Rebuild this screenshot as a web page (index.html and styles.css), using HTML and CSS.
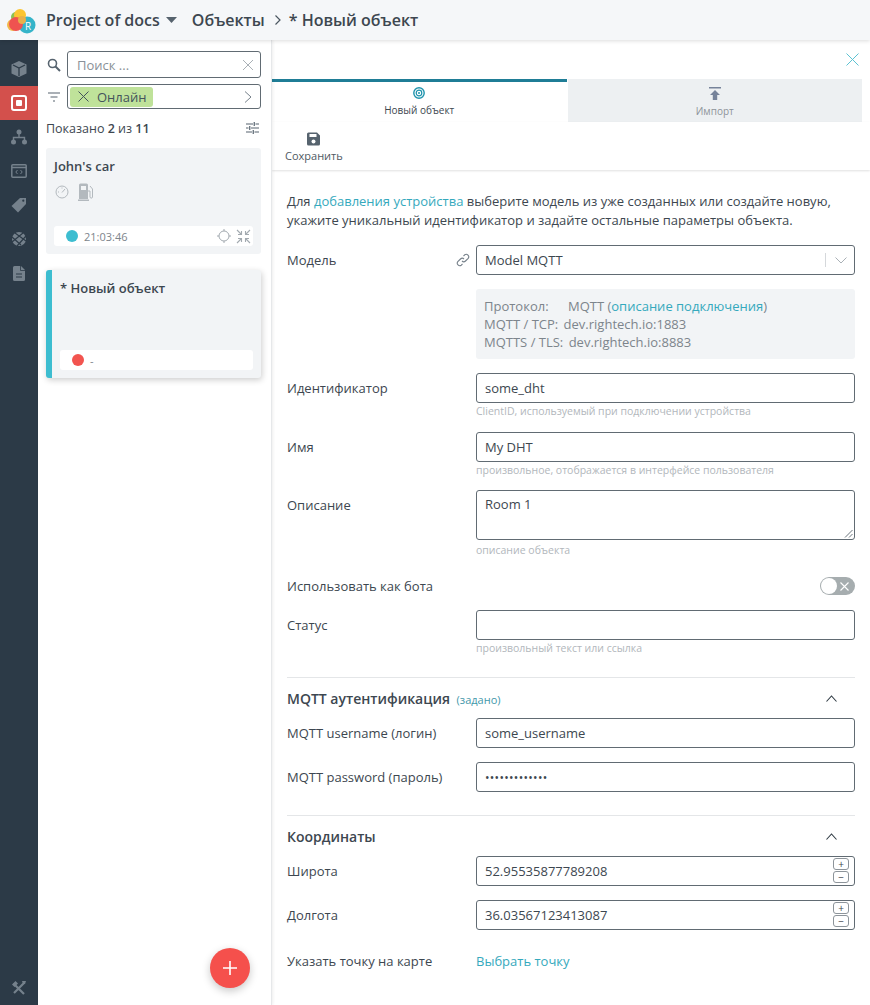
FILE: index.html
```html
<!DOCTYPE html>
<html lang="ru">
<head>
<meta charset="utf-8">
<title>Новый объект</title>
<link rel="stylesheet" href="styles.css">
</head>
<body>
<header class="topbar">
  <svg class="logo" width="36" height="34" viewBox="0 0 36 34">
    <circle cx="25" cy="22" r="8.5" fill="#35b4c9"/>
    <circle cx="11" cy="22" r="6" fill="#f2b84a"/>
    <circle cx="14" cy="14" r="5" fill="#8cc152"/>
    <circle cx="18" cy="12" r="6" fill="#fbc531"/>
    <circle cx="14" cy="21" r="7" fill="#ef5350"/>
    <circle cx="20" cy="17" r="4" fill="#e8b04a"/>
    <text x="23" y="27" class="logo-r">R</text>
  </svg>
  <span class="crumb project">Project of docs</span>
  <svg class="caret" width="11" height="6" viewBox="0 0 11 6"><path d="M0 0h11L5.5 6z" fill="#56636e"/></svg>
  <span class="crumb section">Объекты</span>
  <svg class="crumb-sep" width="8" height="12" viewBox="0 0 8 12"><path d="M1.5 1.5 6 6l-4.500 4.500" fill="none" stroke="#4a5660" stroke-width="1.200"/></svg>
  <span class="crumb">* Новый объект</span>
</header>

<div class="shell">
  <nav class="rail">
    <div class="rail-top">
      <div class="rail-item">
        <svg width="18" height="18" viewBox="0 0 18 18"><path d="M9 1 16.500 4.500v9L9 17l-7.500-3.500v-9z" fill="#75818c"/><path d="M3 5l6 3 6-3M9 8v8" fill="none" stroke="#2c3a47" stroke-width="1.300"/></svg>
      </div>
      <div class="rail-item active">
        <svg width="16" height="16" viewBox="0 0 16 16"><rect x="1" y="1" width="14" height="14" rx="2" fill="none" stroke="#fff" stroke-width="2"/><rect x="5" y="5" width="6" height="6" rx="1" fill="#fff"/></svg>
      </div>
      <div class="rail-item">
        <svg width="16" height="16" viewBox="0 0 16 16"><circle cx="8" cy="3" r="2.500" fill="#75818c"/><circle cx="2.500" cy="13" r="2.500" fill="#75818c"/><circle cx="13.500" cy="13" r="2.500" fill="#75818c"/><path d="M8 5v3M2.500 11V8.500h11V11" fill="none" stroke="#75818c" stroke-width="1.400"/></svg>
      </div>
      <div class="rail-item">
        <svg width="16" height="16" viewBox="0 0 16 16"><rect x=".8" y="1.800" width="14.400" height="12.400" rx="1" fill="none" stroke="#75818c" stroke-width="1.500"/><path d="M1 4.500h14" stroke="#75818c" stroke-width="1.500"/><path d="M6.500 7 4.800 9l1.700 2M9.500 7l1.700 2-1.700 2" fill="none" stroke="#75818c" stroke-width="1"/></svg>
      </div>
      <div class="rail-item">
        <svg width="16" height="16" viewBox="0 0 16 16"><path d="M9 1h6v6l-8 8.500L.5 9z" fill="#75818c"/><circle cx="12.300" cy="3.700" r="1.100" fill="#2c3a47"/></svg>
      </div>
      <div class="rail-item">
        <svg width="16" height="16" viewBox="0 0 16 16"><circle cx="8" cy="8" r="7" fill="#75818c"/><path d="M1 6l9 8M4 2l11 8M1 11 12 2M6 15 15 5" stroke="#2c3a47" stroke-width="1.200"/></svg>
      </div>
      <div class="rail-item">
        <svg width="12" height="15" viewBox="0 0 12 15"><path d="M0 1.500A1.500 1.500 0 0 1 1.500 0H8l4 4v9.500a1.500 1.500 0 0 1-1.500 1.500h-9A1.500 1.500 0 0 1 0 13.500z" fill="#75818c"/><path d="M3 8h6M3 11h6" stroke="#2c3a47" stroke-width="1.200"/><path d="M7.500 0v4.500H12" fill="none" stroke="#2c3a47" stroke-width=".8"/></svg>
      </div>
    </div>
    <div class="rail-tools">
      <svg width="14" height="14" viewBox="0 0 14 14"><path d="M1.500 2.500 12 13M12.500 1.500 2 12" stroke="#75818c" stroke-width="2.200"/><path d="M0 3.500 3.500 0 6 2.500 2.500 6zM10 0l4 0-1 3-2 0z" fill="#75818c"/></svg>
    </div>
  </nav>

  <aside class="list-panel">
    <div class="filter-row">
      <svg class="filter-icon" width="14" height="14" viewBox="0 0 14 14"><circle cx="5.500" cy="5.500" r="4" fill="none" stroke="#56636e" stroke-width="1.600"/><path d="M8.500 8.500 13 13" stroke="#56636e" stroke-width="2"/></svg>
      <div class="box search">
        <span class="placeholder">Поиск ...</span>
        <svg width="12" height="12" viewBox="0 0 12 12"><path d="M1 1l10 10M11 1 1 11" stroke="#a9b0b6" stroke-width="1"/></svg>
      </div>
    </div>
    <div class="filter-row second">
      <svg class="filter-icon" width="14" height="10" viewBox="0 0 14 10"><path d="M1 1h12M3.500 5h7M6 9h2" stroke="#56636e" stroke-width="1.200"/></svg>
      <div class="box chips">
        <span class="chip">
          <svg width="11" height="11" viewBox="0 0 11 11"><path d="M.5.500l10 10M10.500.500l-10 10" stroke="#44545c" stroke-width="1"/></svg>
          Онлайн
        </span>
        <svg width="8" height="12" viewBox="0 0 8 12"><path d="M1 .5 7 6l-6 5.500" fill="none" stroke="#76808a" stroke-width="1"/></svg>
      </div>
    </div>
    <div class="shown">
      <span>Показано <b>2</b> из <b>11</b></span>
      <svg width="13" height="12" viewBox="0 0 13 12"><path d="M0 2h7M9.500 2H13M0 6h2.500M5 6h8M0 10h6M8.500 10H13M8.250 0v4M3.750 4v4M7.250 8v4" stroke="#56636e" stroke-width="1.200"/></svg>
    </div>

    <article class="card">
      <h3 class="card-title">John's car</h3>
      <div class="card-icons">
        <svg width="14" height="14" viewBox="0 0 14 14"><circle cx="7" cy="7" r="6" fill="none" stroke="#b3b9be" stroke-width="1"/><path d="M7 7.500 10 4M3 7h1M7 2.500v1" stroke="#b3b9be" stroke-width="1"/></svg>
        <svg width="16" height="18" viewBox="0 0 16 18"><path d="M1 2a1.500 1.500 0 0 1 1.500-1.500h6A1.500 1.500 0 0 1 10 2v14H1z" fill="#b3b9be"/><path d="M0 16.500h11v1.500H0z" fill="#b3b9be"/><rect x="3" y="3" width="5" height="4" fill="#f2f4f6"/><path d="M10 8h2v6c0 1.500 2.500 1.500 2.500 0V6L12 3" fill="none" stroke="#b3b9be" stroke-width="1"/></svg>
      </div>
      <div class="status-pill">
        <span class="dot teal"></span>
        <span class="time">21:03:46</span>
        <span class="pill-tools">
          <svg width="14" height="14" viewBox="0 0 14 14"><circle cx="7" cy="7" r="5" fill="none" stroke="#a3aab0" stroke-width="1"/><path d="M7 0v2M7 12v2M0 7h2M12 7h2" stroke="#a3aab0" stroke-width="1"/></svg>
          <svg width="15" height="15" viewBox="0 0 15 15"><path d="M1 1l4.500 4.500M5.500 2v3.500H2M14 1 9.500 5.500M9.500 2v3.500H13M1 14l4.500-4.500M5.500 13V9.500H2M14 14 9.500 9.500M9.500 13V9.500H13" fill="none" stroke="#a3aab0" stroke-width="1.100"/></svg>
        </span>
      </div>
    </article>

    <article class="card selected">
      <h3 class="card-title">* Новый объект</h3>
      <div class="status-pill">
        <span class="dot red"></span>
        <span class="time">-</span>
      </div>
    </article>

    <button class="fab" type="button" aria-label="Добавить">
      <svg width="14" height="14" viewBox="0 0 14 14"><path d="M7 0v14M0 7h14" stroke="#fff" stroke-width="1.600"/></svg>
    </button>
  </aside>

  <main class="editor">
    <div class="close-row">
      <svg width="13" height="13" viewBox="0 0 13 13"><path d="M.5.500l12 12M12.500.500l-12 12" stroke="#5cc2d2" stroke-width="1"/></svg>
    </div>
    <div class="tabs">
      <div class="tab current">
        <svg width="12" height="12" viewBox="0 0 12 12"><circle cx="6" cy="6" r="5.200" fill="none" stroke="#1e93ad" stroke-width="1.400"/><circle cx="6" cy="6" r="2.800" fill="none" stroke="#1e93ad" stroke-width="1.200"/><circle cx="6" cy="6" r="1" fill="#1e93ad"/></svg>
        <span>Новый объект</span>
      </div>
      <div class="tab">
        <svg width="12" height="13" viewBox="0 0 12 13"><path d="M0 .75h12" stroke="#76839a" stroke-width="1.500"/><path d="M6 3l5 5H8.200v5H3.800V8H1z" fill="#76839a"/></svg>
        <span>Импорт</span>
      </div>
    </div>
    <div class="toolbar">
      <button class="tool" type="button">
        <svg width="13" height="14" viewBox="0 0 13 14"><path d="M1.500.5H10L13 3.500V12a1.500 1.500 0 0 1-1.500 1.500h-10A1.500 1.500 0 0 1 0 12V2A1.500 1.500 0 0 1 1.500.5z" fill="#56636e"/><rect x="2.500" y="2" width="7" height="3" fill="#fff"/><circle cx="6.500" cy="9.500" r="2" fill="#fff"/></svg>
        <span>Сохранить</span>
      </button>
    </div>

    <form class="form">
      <p class="intro">Для <a class="link">добавления устройства</a> выберите модель из уже созданных или создайте новую, укажите уникальный идентификатор и задайте остальные параметры объекта.</p>

      <div class="row model-row">
        <label class="lbl">Модель
          <svg class="chain" width="14" height="14" viewBox="0 0 14 14"><path d="M6 8a2.500 2.500 0 0 0 3.500 0l2.700-2.700a2.500 2.500 0 0 0-3.500-3.500L7.500 3M8 6a2.500 2.500 0 0 0-3.500 0L1.800 8.700a2.500 2.500 0 0 0 3.500 3.500L6.500 11" fill="none" stroke="#76808a" stroke-width="1.100"/></svg>
        </label>
        <div class="input select">
          <span>Model MQTT</span>
          <span class="select-end">
            <i class="select-bar"></i>
            <svg width="12" height="7" viewBox="0 0 12 7"><path d="M.5.500 6 6l5.500-5.500" fill="none" stroke="#a9b0b6" stroke-width="1"/></svg>
          </span>
        </div>
      </div>

      <div class="row info-row">
        <span></span>
        <div class="info">
          <div>Протокол: <span class="gap-a"></span>MQTT (<a class="link">описание подключения</a>)</div>
          <div>MQTT / TCP: <span class="gap-b"></span>dev.rightech.io:1883</div>
          <div>MQTTS / TLS: <span class="gap-b"></span>dev.rightech.io:8883</div>
        </div>
      </div>

      <div class="row ident-row">
        <label class="lbl">Идентификатор</label>
        <div><div class="input">some_dht</div><div class="hint">ClientID, используемый при подключении устройства</div></div>
      </div>

      <div class="row name-row">
        <label class="lbl">Имя</label>
        <div><div class="input">My DHT</div><div class="hint">произвольное, отображается в интерфейсе пользователя</div></div>
      </div>

      <div class="row desc-row">
        <label class="lbl">Описание</label>
        <div>
          <div class="input area">Room 1
            <svg class="grip" width="9" height="9" viewBox="0 0 9 9"><path d="M8.500 1 1 8.500M8.500 5 5 8.500" stroke="#6b747c" stroke-width="1"/></svg>
          </div>
          <div class="hint area-hint">описание объекта</div>
        </div>
      </div>

      <div class="bot-row">
        <label class="lbl plain">Использовать как бота</label>
        <span class="toggle">
          <i class="knob"></i>
          <svg width="9" height="9" viewBox="0 0 9 9"><path d="M.5.500l8 8M8.500.500l-8 8" stroke="#fff" stroke-width="1.100"/></svg>
        </span>
      </div>

      <div class="row status-row">
        <label class="lbl">Статус</label>
        <div><div class="input empty"></div><div class="hint">произвольный текст или ссылка</div></div>
      </div>

      <section class="group mqtt">
        <div class="group-head">
          <h4>MQTT аутентификация <small>(задано)</small></h4>
          <svg width="11" height="7" viewBox="0 0 11 7"><path d="M.5 6.500l5-5.500 5 5.500" fill="none" stroke="#2f3a43" stroke-width="1.100"/></svg>
        </div>
        <div class="row compact">
          <label class="lbl">MQTT username (логин)</label>
          <div class="input">some_username</div>
        </div>
        <div class="row compact">
          <label class="lbl">MQTT password (пароль)</label>
          <div class="input dots">•••••••••••••</div>
        </div>
      </section>

      <section class="group coords">
        <div class="group-head">
          <h4>Координаты</h4>
          <svg width="11" height="7" viewBox="0 0 11 7"><path d="M.5 6.500l5-5.500 5 5.500" fill="none" stroke="#2f3a43" stroke-width="1.100"/></svg>
        </div>
        <div class="row compact">
          <label class="lbl">Широта</label>
          <div class="input number">52.95535877789208
            <span class="stepper"><i>+</i><i>−</i></span>
          </div>
        </div>
        <div class="row compact">
          <label class="lbl">Долгота</label>
          <div class="input number">36.03567123413087
            <span class="stepper"><i>+</i><i>−</i></span>
          </div>
        </div>
        <div class="row pick">
          <label class="lbl">Указать точку на карте</label>
          <a class="link pick-link">Выбрать точку</a>
        </div>
      </section>
    </form>
  </main>
</div>
</body>
</html>
```

FILE: styles.css
```css
* { box-sizing: border-box; }
html, body { margin: 0; height: 100%; overflow: hidden; }
body {
  font-family: "Open Sans", "Noto Sans", sans-serif;
  font-size: 13px;
  color: #3d4750;
  background: #fff;
  display: flex;
  flex-direction: column;
  width: 870px;
  height: 1005px;
}
.topbar {
  height: 40px;
  flex: none;
  display: flex;
  align-items: center;
  background: #f5f7f9;
  box-shadow: 0 1px 4px rgba(0, 0, 0, .14);
  position: relative;
  z-index: 3;
}
.logo { margin: 0 8px 0 2px; flex: none; }
.logo-r { font-size: 10px; fill: #fff; font-family: "Open Sans", sans-serif; }
.crumb { font-size: 16px; font-weight: 600; color: #3d4750; }
.caret { margin: 0 15px 0 6px; }
.crumb-sep { margin: 0 7px 0 9px; }

.shell { flex: 1; display: flex; min-height: 0; }

.rail {
  width: 38px;
  flex: none;
  background: #2c3a47;
  display: flex;
  flex-direction: column;
  justify-content: space-between;
  padding: 12px 0 0;
}
.rail-top { display: flex; flex-direction: column; }
.rail-item { height: 34px; display: flex; align-items: center; justify-content: center; }
.rail-item.active { background: #d3504c; }
.rail-tools { height: 34px; display: flex; align-items: center; justify-content: center; }

.list-panel {
  width: 234px;
  flex: none;
  padding: 11px 10px 0 8px;
  border-right: 1px solid #e6e8ea;
  box-shadow: 1px 0 3px rgba(0, 0, 0, .07);
  position: relative;
  z-index: 1;
  background: #fff;
}
.filter-row { display: flex; align-items: center; gap: 6px; }
.filter-row.second { margin-top: 6px; }
.filter-icon { flex: none; margin-left: 1px; width: 14px; }
.box {
  flex: 1;
  border: 1px solid #616b73;
  border-radius: 3px;
  display: flex;
  align-items: center;
  justify-content: space-between;
  padding: 0 6px 0 9px;
  background: #fff;
}
.search { height: 27px; }
.placeholder { color: #8a9198; font-size: 13px; }
.chips { height: 25px; padding-left: 2px; padding-right: 8px; }
.chip {
  height: 20px;
  background: #bfe29a;
  border-radius: 3px;
  padding: 0 6px 0 8px;
  display: inline-flex;
  align-items: center;
  gap: 8px;
  font-size: 13px;
  color: #44545c;
}
.shown {
  margin-top: 9px;
  height: 20px;
  display: flex;
  align-items: center;
  justify-content: space-between;
  padding-right: 2px;
  font-size: 12.500px;
  color: #3d4750;
}
.shown b { font-weight: 600; }

.card {
  margin-top: 10px;
  height: 106px;
  background: #f2f4f6;
  border-radius: 3px;
  padding: 8px 8px 8px;
  display: flex;
  flex-direction: column;
}
.card.selected {
  margin-top: 16px;
  height: 108px;
  border-left: 6px solid #3dbdd0;
  box-shadow: 1px 2px 6px rgba(0, 0, 0, .2);
  padding-left: 8px;
}
.card-title { margin: 0; font-size: 13px; line-height: 20px; font-weight: 600; color: #3d4750; }
.card-icons { display: flex; align-items: center; gap: 9px; margin-top: 7px; margin-left: 1px; }
.status-pill {
  margin-top: auto;
  height: 20px;
  background: #fff;
  border-radius: 3px;
  display: flex;
  align-items: center;
  padding: 0 2px 0 12px;
  font-size: 11px;
  color: #7d858c;
}
.selected .status-pill { margin-top: auto; }
.dot { width: 12px; height: 12px; border-radius: 50%; margin-right: 6px; flex: none; }
.dot.teal { background: #3dbdd0; }
.dot.red { background: #f2544f; }
.pill-tools { margin-left: auto; display: flex; align-items: center; gap: 5px; }

.fab {
  position: absolute;
  left: 172px;
  top: 908px;
  width: 40px;
  height: 40px;
  border-radius: 50%;
  border: 0;
  padding: 0;
  background: #f5504c;
  box-shadow: 0 3px 8px rgba(0, 0, 0, .22);
  display: flex;
  align-items: center;
  justify-content: center;
}

.editor { flex: 1; min-width: 0; display: flex; flex-direction: column; }
.close-row { height: 39px; flex: none; display: flex; align-items: center; justify-content: flex-end; padding-right: 11px; }
.tabs { display: flex; height: 43px; flex: none; padding-right: 8px; }
.tab {
  flex: 1;
  display: flex;
  flex-direction: column;
  align-items: center;
  gap: 4px;
  padding-top: 8px;
  background: #edf0f2;
  font-size: 10px;
  line-height: 14px;
  color: #8d949a;
}
.tab.current { background: #fff; color: #3d4750; border-top: 3px solid #1f7d96; padding-top: 5px; margin-right: 1px; }
.toolbar {
  height: 48px;
  flex: none;
  padding: 10px 0 0 13px;
  box-shadow: 0 1px 2px rgba(0, 0, 0, .12);
}
.tool {
  border: 0;
  background: none;
  padding: 0;
  font: inherit;
  font-size: 11px;
  line-height: 14px;
  color: #4f5a63;
  display: flex;
  flex-direction: column;
  align-items: center;
  gap: 3px;
}

.form { padding: 0 15px; flex: 1; }
.intro { margin: 22px 0 0; font-size: 13px; line-height: 19px; color: #3d4750; width: 560px; }
.link { color: #35a9bd; }
.row { display: grid; grid-template-columns: 189px 379px; align-items: start; }
.model-row { margin-top: 15px; }
.info-row { margin-top: 14px; }
.ident-row { margin-top: 14px; }
.name-row { margin-top: 14px; }
.desc-row { margin-top: 13px; }
.status-row { margin-top: 14px; }
.lbl { display: flex; align-items: center; justify-content: space-between; height: 30px; padding-right: 6px; font-size: 13px; color: #3d4750; }
.lbl.plain { padding: 0; height: 20px; }
.chain { flex: none; }
.input {
  height: 30px;
  border: 1px solid #616b73;
  border-radius: 3px;
  padding: 0 8px;
  display: flex;
  align-items: center;
  font-size: 13px;
  color: #3d4750;
  background: #fff;
  position: relative;
}
.select { justify-content: space-between; padding-right: 7px; }
.select-end { display: flex; align-items: center; gap: 9px; }
.select-bar { width: 1px; height: 14px; background: #d5d8db; }
.area { height: 50px; align-items: flex-start; padding-top: 4px; }
.grip { position: absolute; right: 1px; bottom: 1px; }
.info {
  height: 70px;
  background: #f2f4f6;
  border-radius: 3px;
  padding: 8px 8px;
  font-size: 13px;
  line-height: 18px;
  color: #7d858c;
}
.gap-a { display: inline-block; width: 16px; }
.gap-b { display: inline-block; width: 2px; }
.hint { font-size: 10.500px; line-height: 14px; color: #b2b7bc; margin-top: 1px; }
.area-hint { margin-top: 3px; }
.bot-row { display: flex; align-items: center; justify-content: space-between; margin-top: 19px; height: 20px; }
.toggle {
  width: 35px;
  height: 18px;
  border-radius: 9px;
  background: #a6adaf;
  position: relative;
  display: flex;
  align-items: center;
  justify-content: flex-end;
  padding-right: 6px;
}
.knob {
  position: absolute;
  left: 1px;
  top: 1px;
  width: 16px;
  height: 16px;
  border-radius: 50%;
  background: #fff;
}
.group { border-top: 1px solid #e4e6e8; }
.mqtt { margin-top: 22px; }
.coords { margin-top: 23px; }
.group-head {
  height: 40px;
  display: flex;
  align-items: center;
  justify-content: space-between;
  padding-right: 18px;
}
.group-head h4 { margin: 0; font-size: 14px; font-weight: 600; color: #3d4750; }
.group-head small { font-size: 11px; font-weight: 400; color: #3f98aa; margin-left: 3px; }
.row.compact { margin-bottom: 14px; }
.dots { letter-spacing: .3px; font-size: 12px; }
.number { padding-right: 4px; }
.stepper { position: absolute; right: 5px; top: 1px; display: flex; flex-direction: column; gap: 1px; }
.stepper i {
  width: 16px;
  height: 12px;
  border: 1px solid #8d949a;
  border-radius: 3px;
  font-style: normal;
  font-size: 10px;
  line-height: 10px;
  text-align: center;
  color: #3d4750;
}
.row.pick { margin-top: 16px; }
.pick-link { line-height: 30px; font-size: 13px; }
```
